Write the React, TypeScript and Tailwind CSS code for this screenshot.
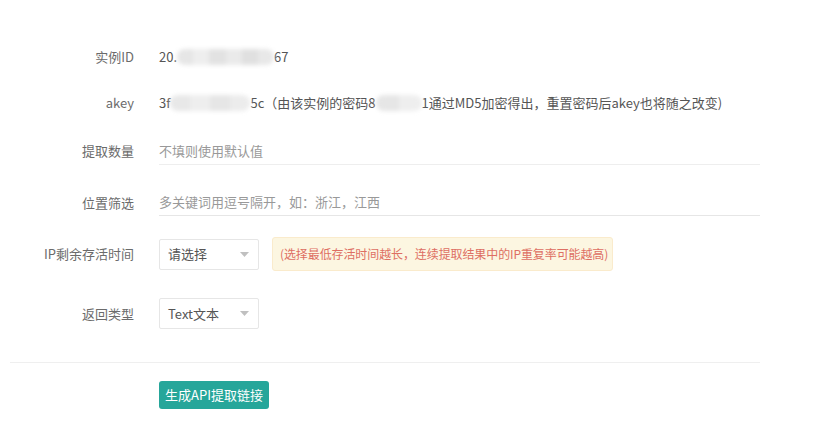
import React from "react";

const font = { fontFamily: '"Noto Sans CJK SC", "Noto Sans", sans-serif' };

function Blob({ w, shades }: { w: number; shades: string[] }) {
  return (
    <span className="relative inline-block h-[16px] align-middle" style={{ width: w }}>
      <span className="absolute inset-0 flex blur-[2px] rounded-full overflow-hidden">
        {shades.map((c, i) => (
          <span key={i} className="h-full flex-1" style={{ background: c }} />
        ))}
      </span>
    </span>
  );
}

function Label({ children }: { children: React.ReactNode }) {
  return <div className="w-[124px] shrink-0 text-right text-[13px] text-[#6b6b6b]">{children}</div>;
}

function Caret() {
  return (
    <svg width="9" height="5" viewBox="0 0 9 5" className="shrink-0">
      <path d="M0 0 L9 0 L4.5 5 Z" fill="#c0c0c0" />
    </svg>
  );
}

function Select({ text }: { text: string }) {
  return (
    <div className="flex h-[31px] w-[100px] items-center justify-between rounded-[2px] border border-[#e6e6e6] bg-white pl-[8px] pr-[9px] text-[13px] text-[#555]">
      <span>{text}</span>
      <Caret />
    </div>
  );
}

export default function App() {
  return (
    <div className="min-h-[430px] w-[821px] bg-white" style={font}>
      <div className="ml-[10px] w-[750px] pt-[47px]">
        <div className="flex h-[20px] items-center">
          <Label>实例ID</Label>
          <div className="ml-[25px] flex items-center text-[13px] text-[#555]">
            <span>20.</span>
            <Blob w={97} shades={["#e6e6e6", "#eeeeee", "#e2e2e2", "#eaeaea", "#e0e0e0", "#e8e8e8"]} />
            <span>67</span>
          </div>
        </div>
        <div className="mt-[26px] flex h-[20px] items-center">
          <Label>akey</Label>
          <div className="ml-[25px] flex items-center whitespace-nowrap text-[13px] text-[#555]">
            <span>3f</span>
            <Blob w={80} shades={["#e8e8e8", "#eeeeee", "#e6e6e6", "#ececec"]} />
            <span>5c（由该实例的密码8</span>
            <Blob w={46} shades={["#e6e6e6", "#eeeeee"]} />
            <span>1通过MD5加密得出，重置密码后akey也将随之改变)</span>
          </div>
        </div>
        <div className="mt-[24px] flex h-[28px] items-center">
          <Label>提取数量</Label>
          <div className="ml-[25px] flex h-[28px] flex-1 items-center border-b border-[#eeeeee] text-[13px] text-[#999]">
            不填则使用默认值
          </div>
        </div>
        <div className="mt-[24px] flex h-[27px] items-center">
          <Label>位置筛选</Label>
          <div className="ml-[25px] flex h-[27px] flex-1 items-center border-b border-[#e6e6e6] text-[13px] text-[#999]">
            多关键词用逗号隔开，如：浙江，江西
          </div>
        </div>
        <div className="mt-[21px] flex h-[34px] items-center">
          <Label>IP剩余存活时间</Label>
          <div className="ml-[25px]">
            <Select text="请选择" />
          </div>
          <div className="ml-[13px] flex h-[34px] w-[341px] items-center rounded-[3px] border border-[#faebcc] bg-[#fcf6e1] pl-[7px] text-[12px] tracking-[-0.1px] text-[#de6f63]">
            (选择最低存活时间越长，连续提取结果中的IP重复率可能越高)
          </div>
        </div>
        <div className="mt-[27px] flex h-[31px] items-center">
          <Label>返回类型</Label>
          <div className="ml-[25px]">
            <Select text="Text文本" />
          </div>
        </div>
        <div className="mt-[33px] h-px bg-[#efefef]" />
        <div className="mt-[18px] flex">
          <div className="ml-[149px] flex h-[28px] w-[110px] items-center justify-center rounded-[3px] bg-[#26a69a] text-[13px] text-white">
            生成API提取链接
          </div>
        </div>
      </div>
    </div>
  );
}
